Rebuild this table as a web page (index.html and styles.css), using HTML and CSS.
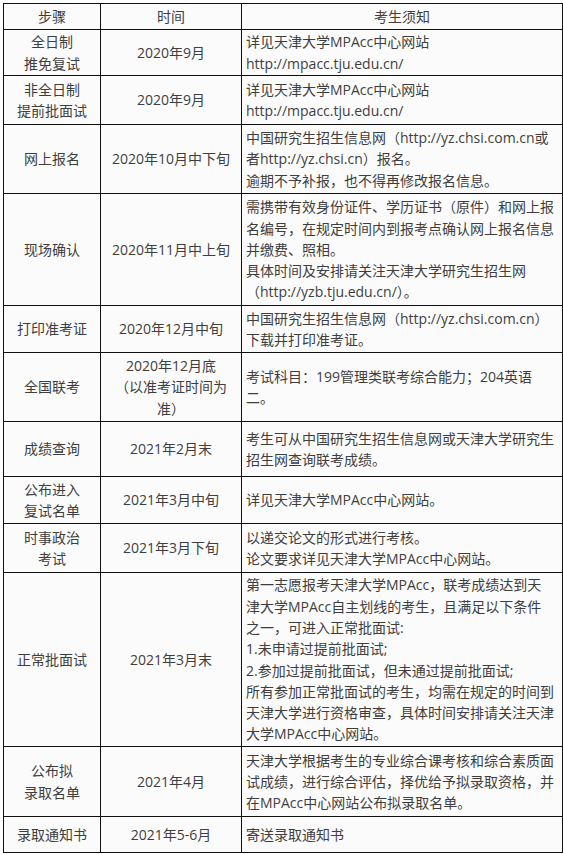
FILE: index.html
```html
<!DOCTYPE html>
<html lang="zh-CN">
<head>
<meta charset="utf-8">
<title>天津大学MPAcc招生时间安排</title>
<link rel="stylesheet" href="styles.css">
</head>
<body>
<div class="wrap">
<table class="schedule">
<colgroup><col class="c-step"><col class="c-time"><col class="c-note"></colgroup>
<tr class="r26"><td>步骤</td><td>时间</td><td class="center">考生须知</td></tr>
<tr class="r46"><td>全日制<br>推免复试</td><td>2020年9月</td><td class="note">详见天津大学MPAcc中心网站<br>http://mpacc.tju.edu.cn/</td></tr>
<tr class="r49"><td>非全日制<br>提前批面试</td><td>2020年9月</td><td class="note">详见天津大学MPAcc中心网站<br>http://mpacc.tju.edu.cn/</td></tr>
<tr class="r69"><td>网上报名</td><td>2020年10月中下旬</td><td class="note">中国研究生招生信息网（http://yz.chsi.com.cn或<br>者http://yz.chsi.cn）报名。<br>逾期不予补报，也不得再修改报名信息。</td></tr>
<tr class="r112"><td>现场确认</td><td>2020年11月中上旬</td><td class="note">需携带有效身份证件、学历证书（原件）和网上报<br>名编号，在规定时间内到报考点确认网上报名信息<br>并缴费、照相。<br>具体时间及安排请关注天津大学研究生招生网<br>（http://yzb.tju.edu.cn/）。</td></tr>
<tr class="r47"><td>打印准考证</td><td>2020年12月中旬</td><td class="note">中国研究生招生信息网（http://yz.chsi.com.cn）<br>下载并打印准考证。</td></tr>
<tr class="r69"><td>全国联考</td><td>2020年12月底<br>（以准考证时间为<br>准）</td><td class="note">考试科目：199管理类联考综合能力；204英语<br>二。</td></tr>
<tr class="r55"><td>成绩查询</td><td>2021年2月末</td><td class="note">考生可从中国研究生招生信息网或天津大学研究生<br>招生网查询联考成绩。</td></tr>
<tr class="r47"><td>公布进入<br>复试名单</td><td>2021年3月中旬</td><td class="note">详见天津大学MPAcc中心网站。</td></tr>
<tr class="r49"><td>时事政治<br>考试</td><td>2021年3月下旬</td><td class="note">以递交论文的形式进行考核。<br>论文要求详见天津大学MPAcc中心网站。</td></tr>
<tr class="r174"><td>正常批面试</td><td>2021年3月末</td><td class="note">第一志愿报考天津大学MPAcc，联考成绩达到天<br>津大学MPAcc自主划线的考生，且满足以下条件<br>之一，可进入正常批面试:<br>1.未申请过提前批面试;<br>2.参加过提前批面试，但未通过提前批面试;<br>所有参加正常批面试的考生，均需在规定的时间到<br>天津大学进行资格审查，具体时间安排请关注天津<br>大学MPAcc中心网站。</td></tr>
<tr class="r70"><td>公布拟<br>录取名单</td><td>2021年4月</td><td class="note">天津大学根据考生的专业综合课考核和综合素质面<br>试成绩，进行综合评估，择优给予拟录取资格，并<br>在MPAcc中心网站公布拟录取名单。</td></tr>
<tr class="r36"><td>录取通知书</td><td>2021年5-6月</td><td class="note">寄送录取通知书</td></tr>
</table>
</div>
</body>
</html>
```
FILE: styles.css
```css
html, body {
  margin: 0;
  padding: 0;
  background: #ffffff;
}
.wrap {
  padding: 3px 0 0 3px;
}
.schedule {
  border-collapse: collapse;
  width: 559px;
  table-layout: fixed;
  background: #fbfbfb;
  font-family: "Open Sans", "Noto Sans CJK SC", sans-serif;
  font-size: 14px;
  line-height: 21.33px;
  color: #3e3e3e;
}
.c-step { width: 97px; }
.c-time { width: 141px; }
.c-note { width: 321px; }
.schedule td {
  border: 1px solid #111;
  padding: 0 4px;
  text-align: center;
  vertical-align: middle;
  white-space: nowrap;
}
.schedule td.note {
  text-align: left;
}
.r26 { height: 26px; }
.r36 { height: 36px; }
.r46 { height: 46px; }
.r47 { height: 47px; }
.r49 { height: 49px; }
.r55 { height: 55px; }
.r69 { height: 69px; }
.r70 { height: 70px; }
.r112 { height: 112px; }
.r174 { height: 174px; }
```
